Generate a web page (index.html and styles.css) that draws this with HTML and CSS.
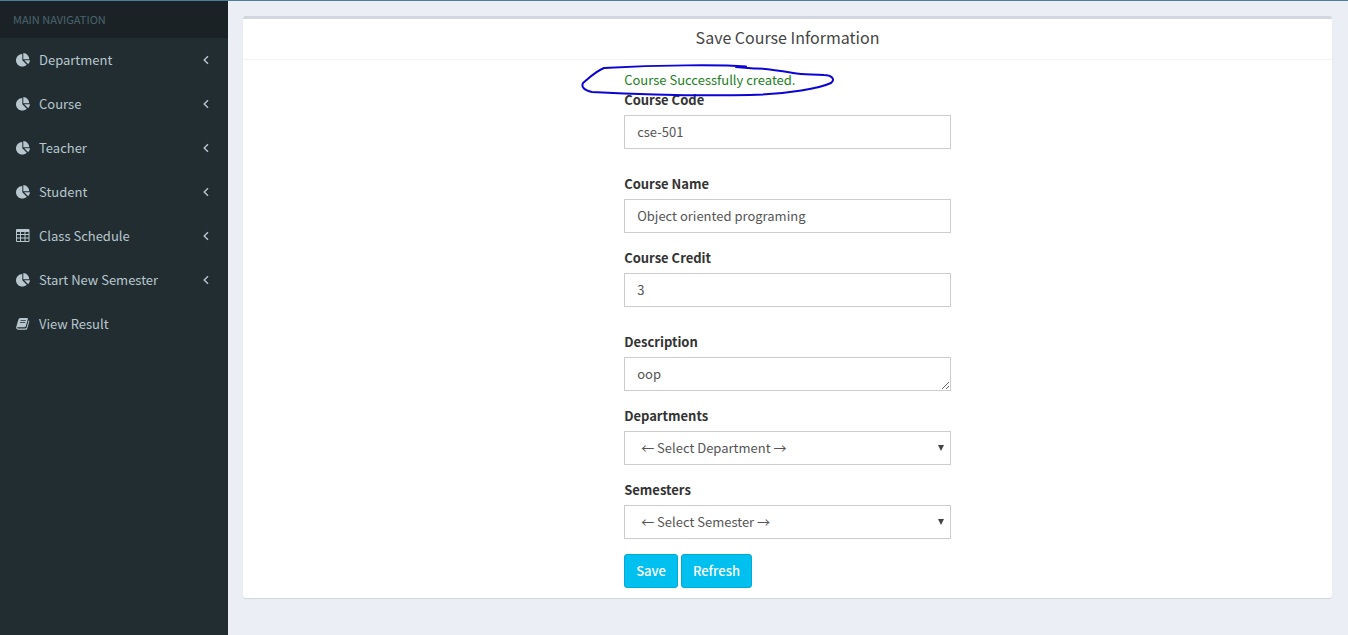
FILE: index.html
```html
<!DOCTYPE html>
<html lang="en">
<head>
<meta charset="utf-8">
<title>Save Course Information</title>
<link rel="stylesheet" href="styles.css">
</head>
<body>
<svg class="sprite" aria-hidden="true">
  <symbol id="pie" viewBox="0 0 14 14"><path d="M6.3 1V7.300L10.75 11.75A6.3 6.3 0 1 1 6.3 1Z"/><path d="M7.300 0A6.3 6.3 0 0 1 13.3 6.2H7.300Z"/><path d="M8.2 7.3H14A6.3 6.3 0 0 1 12.200 11.300Z"/></symbol>
  <symbol id="grid" viewBox="0 0 14 14"><path fill-rule="evenodd" d="M1 0H12.5Q13.5 0 13.5 1V12Q13.5 13 12.5 13H1Q0 13 0 12V1Q0 0 1 0ZM1 3V5H4V3ZM5 3V5H8.5V3ZM9.5 3V5H12.5V3ZM1 6V8.5H4V6ZM5 6V8.5H8.5V6ZM9.5 6V8.5H12.5V6ZM1 9.5V12H4V9.5ZM5 9.5V12H8.5V9.5ZM9.5 9.5V12H12.5V9.5Z"/></symbol>
  <symbol id="book" viewBox="0 0 14 14"><path fill-rule="evenodd" d="M4.2 1H11Q12.2 1 11.9 2.1L9.8 9.2Q9.5 10.2 8.5 10.2H1.6Q1.1 10.2 1.2 10.8Q1.3 11.5 2.2 11.5H9.5Q10.2 11.5 10.5 10.7L12.7 3.2Q13.6 3.6 13.3 4.6L11.3 11.5Q10.9 12.8 9.6 12.8H2.1Q.1 12.6 .1 10.6L2.4 2.5Q2.9 1 4.2 1ZM4.7 3.3L4.5 4.1H9.7L9.9 3.3ZM4.1 5.3L3.9 6.1H9.1L9.3 5.3Z"/></symbol>
  <symbol id="angle" viewBox="0 0 6 10"><path d="M5 1.2L1.2 5L5 8.8" fill="none" stroke="currentColor" stroke-width="1.4"/></symbol>
</svg>
<div class="topbar"></div>
<div class="wrapper">
  <aside class="sidebar">
    <div class="nav-header">MAIN NAVIGATION</div>
    <nav class="menu">
      <a class="menu-link" href="#"><svg class="icon"><use href="#pie"/></svg><span>Department</span><svg class="angle"><use href="#angle"/></svg></a>
      <a class="menu-link" href="#"><svg class="icon"><use href="#pie"/></svg><span>Course</span><svg class="angle"><use href="#angle"/></svg></a>
      <a class="menu-link" href="#"><svg class="icon"><use href="#pie"/></svg><span>Teacher</span><svg class="angle"><use href="#angle"/></svg></a>
      <a class="menu-link" href="#"><svg class="icon"><use href="#pie"/></svg><span>Student</span><svg class="angle"><use href="#angle"/></svg></a>
      <a class="menu-link" href="#"><svg class="icon"><use href="#grid"/></svg><span>Class Schedule</span><svg class="angle"><use href="#angle"/></svg></a>
      <a class="menu-link" href="#"><svg class="icon"><use href="#pie"/></svg><span>Start New Semester</span><svg class="angle"><use href="#angle"/></svg></a>
      <a class="menu-link" href="#"><svg class="icon"><use href="#book"/></svg><span>View Result</span></a>
    </nav>
  </aside>
  <main class="content">
    <section class="box">
      <header class="box-header"><h3 class="box-title">Save Course Information</h3></header>
      <form class="form">
        <div class="message">Course Successfully created.
          <svg class="ink" viewBox="0 0 256 34"><path d="M166 3.5C140 1.5 80 2 24 5C16 8 9 15 3 20C1 24 4 27 12 29C70 32 120 33 170 32C210 31 240 25 251 20C256 16 251 12 244 12C232 11 224 12 213 10C196 7 185 5 174 5.500L156 4"/></svg>
        </div>
        <div class="group spaced"><label for="code">Course Code</label><input class="control" id="code" type="text" value="cse-501"></div>
        <div class="group"><label for="name">Course Name</label><input class="control" id="name" type="text" value="Object oriented programing"></div>
        <div class="group spaced"><label for="credit">Course Credit</label><input class="control" id="credit" type="text" value="3"></div>
        <div class="group"><label for="desc">Description</label><textarea class="control" id="desc" rows="1">oop</textarea></div>
        <div class="group"><label for="dept">Departments</label>
          <div class="select-wrap"><select class="control" id="dept"><option>← Select Department →</option></select><svg class="caret" viewBox="0 0 6 6"><path d="M0 0H6L3 6Z"/></svg></div></div>
        <div class="group"><label for="sem">Semesters</label>
          <div class="select-wrap"><select class="control" id="sem"><option>← Select Semester →</option></select><svg class="caret" viewBox="0 0 6 6"><path d="M0 0H6L3 6Z"/></svg></div></div>
        <div class="actions"><button class="btn" type="submit">Save</button><button class="btn" type="button">Refresh</button></div>
      </form>
    </section>
  </main>
</div>
</body>
</html>
```
FILE: styles.css
```css
* { box-sizing: border-box; }
body {
  margin: 0;
  min-height: 100vh;
  display: flex;
  flex-direction: column;
  background: #ecf0f5;
  color: #333;
  font-family: "Noto Sans CJK JP", "Noto Sans", sans-serif;
  font-size: 13px;
  line-height: 20px;
}
.sprite { display: none; }
.topbar { height: 1px; background: #4d7d99; }
.wrapper { flex: 1; display: flex; }

.sidebar { width: 228px; flex-shrink: 0; background: #222d32; }
.nav-header {
  padding: 8px 13px 9px;
  background: #1a2226;
  color: #4b646f;
  font-size: 11px;
}
.menu-link {
  display: flex;
  align-items: center;
  height: 44px;
  padding: 0 19px 0 16px;
  color: #b8c7ce;
  text-decoration: none;
}
.icon { width: 14px; height: 14px; margin-right: 9px; fill: currentColor; }
.angle { width: 6px; height: 10px; margin-left: auto; }

.content { flex: 1; padding: 15px 16px 36px 15px; background: #ebeef5; }
.box {
  background: #fff;
  border-top: 3px solid #d2d6de;
  border-radius: 3px;
  box-shadow: 0 1px 1px rgba(0, 0, 0, 0.1);
}
.box-header { padding: 7px 10px 11px; border-bottom: 1px solid #f4f4f4; text-align: center; }
.box-title { margin: 0; color: #444; font-size: 16px; font-weight: 400; line-height: 22px; }

.form { width: 30%; margin: 0 auto; padding: 10px 0; }
.message { position: relative; color: #228022; }
.ink {
  position: absolute;
  top: -7px;
  left: -44px;
  width: 256px;
  height: 34px;
  fill: none;
  stroke: #0c04d4;
  stroke-width: 2;
  stroke-linejoin: round;
  stroke-linecap: round;
}
.group { margin-bottom: 15px; }
.spaced { margin-bottom: 25px; }
label { display: block; margin-bottom: 5px; font-weight: 700; }
.control {
  display: block;
  width: 100%;
  height: 34px;
  padding: 6px 12px;
  border: 1px solid #ccc;
  border-radius: 0;
  background: #fff;
  color: #555;
  font: inherit;
}
input.control { padding: 5px 12px 7px; }
textarea.control { resize: vertical; overflow: hidden; }
select.control { appearance: none; padding: 6px 16px; }
.select-wrap { position: relative; }
.caret { position: absolute; right: 7px; top: 14px; width: 6px; height: 6px; fill: #444; }
.actions { display: flex; gap: 3px; }
.btn {
  height: 34px;
  padding: 6px 11px;
  border: 1px solid #00acd6;
  border-radius: 3px;
  background: #00c0ef;
  color: #fff;
  font: inherit;
  font-weight: 500;
}
```
